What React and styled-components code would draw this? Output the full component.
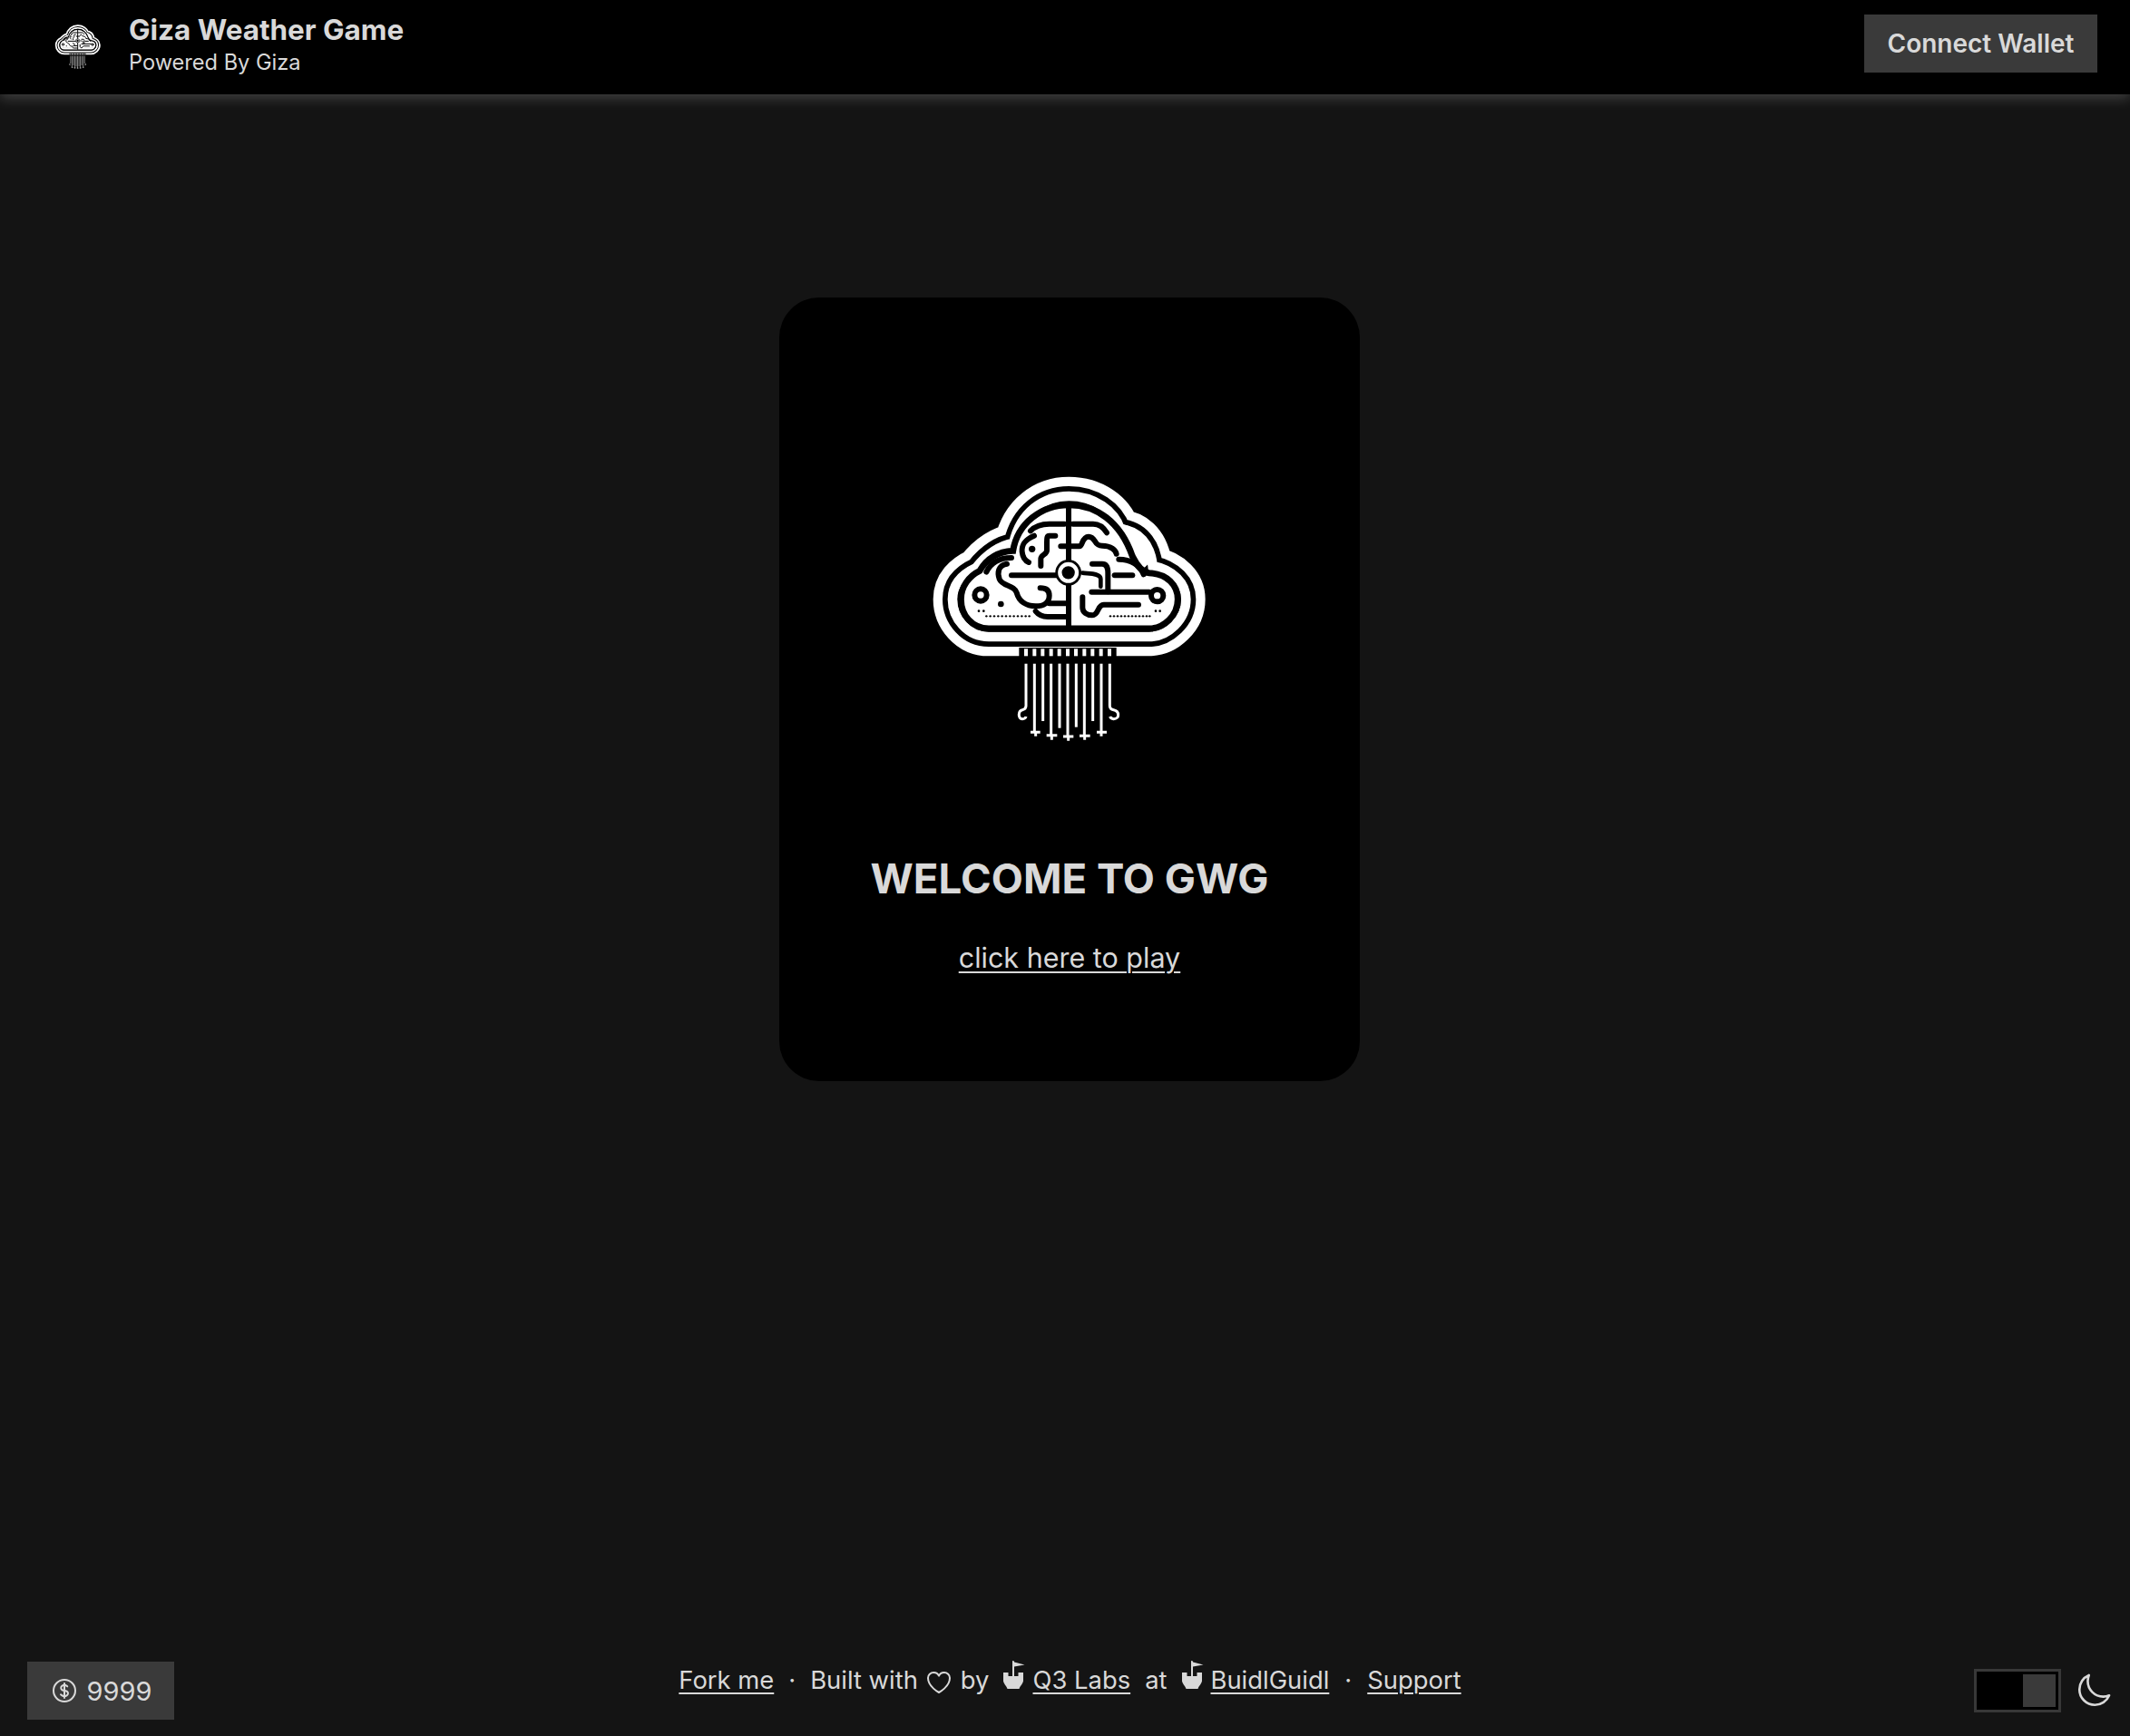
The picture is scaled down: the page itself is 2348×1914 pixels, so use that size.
import React from "react";
import styled, { createGlobalStyle } from "styled-components";
import { HiOutlineCurrencyDollar, HiOutlineHeart, HiOutlineMoon } from "react-icons/hi2";

const Global = createGlobalStyle`
  html, body { margin: 0; padding: 0; background: #141414; }
  body { font-family: Inter, "Liberation Sans", sans-serif; color: #d9d9d9; }
  * { box-sizing: border-box; }
`;

const Page = styled.div`
  display: flex;
  flex-direction: column;
  height: 1914px;
  background: #141414;
`;

const Navbar = styled.header`
  position: relative;
  z-index: 2;
  flex: none;
  display: flex;
  align-items: flex-start;
  justify-content: space-between;
  height: 104px;
  padding: 16px 36px 0 56px;
  background: #000;
  box-shadow: 0 4px 14px rgba(255, 255, 255, 0.2);
`;

const Brand = styled.div`
  display: flex;
  align-items: center;
  gap: 26px;
  height: 70px;
`;

const BrandText = styled.div`
  display: flex;
  flex-direction: column;
`;

const Title = styled.div`
  font-size: 31.4px;
  line-height: 36px;
  font-weight: 700;
  margin-top: -3px;
`;

const Subtitle = styled.div`
  font-size: 23.6px;
  line-height: 32px;
  font-weight: 400;
  margin-top: 2px;
`;

const ConnectButton = styled.button`
  width: 257px;
  height: 64px;
  border: 0;
  padding: 0;
  background: #3a3a3a;
  color: #d9d9d9;
  font: 600 28px Inter, sans-serif;
`;

const Main = styled.main`
  flex: 1;
  min-height: 0;
  display: flex;
  justify-content: center;
  padding: 224px 0 0 10px;
`;

const Card = styled.section`
  width: 640px;
  height: 864px;
  display: flex;
  flex-direction: column;
  align-items: center;
  padding-top: 172px;
  background: #000;
  border-radius: 44px;
`;

const Heading = styled.h1`
  margin: 102px 0 0;
  font-size: 45.6px;
  line-height: 54px;
  font-weight: 700;
  color: #d9d9d9;
`;

const PlayLink = styled.a`
  margin-top: 40px;
  font-size: 30.5px;
  line-height: 40px;
  color: #d9d9d9;
  text-decoration: underline;
  text-decoration-thickness: 2px;
  text-underline-offset: 4px;
`;

const Footer = styled.footer`
  flex: none;
  display: grid;
  grid-template-columns: 1fr auto 1fr;
  align-items: center;
  height: 82px;
  padding: 0 19px 18px 30px;
`;

const Balance = styled.div`
  justify-self: start;
  display: flex;
  align-items: center;
  justify-content: center;
  gap: 9px;
  width: 162px;
  height: 64px;
  background: #3a3a3a;
  font-size: 29px;
  font-weight: 400;
`;

const Credits = styled.nav`
  display: flex;
  align-items: center;
  height: 44px;
  margin-top: -24px;
  font-size: 27.4px;
  line-height: 36px;
`;

const CreditLink = styled.a`
  color: #d9d9d9;
  text-decoration: underline;
  text-decoration-thickness: 2px;
  text-underline-offset: 4px;
`;

const Dot = styled.span`
  margin: 0 ${(p) => p.$space}px;
`;

const Word = styled.span`
  margin: 0 ${(p) => p.$right ?? 7}px 0 ${(p) => p.$left ?? 0}px;
`;

const Castle = styled.svg`
  flex: none;
  width: 26px;
  height: 34px;
  margin: -10px 7px 0 0;
  fill: #d9d9d9;
`;

const HeartIcon = styled(HiOutlineHeart)`
  flex: none;
  margin: 6px 8px 0 0;
`;

const Controls = styled.div`
  justify-self: end;
  display: flex;
  align-items: center;
  gap: 15px;
`;

const Toggle = styled.div`
  display: flex;
  justify-content: flex-end;
  width: 96px;
  height: 48px;
  padding: 3px;
  border: 3px solid #383838;
  background: #000;
`;

const Knob = styled.div`
  width: 36px;
  height: 36px;
  background: #3a3a3a;
`;

const LogoSvg = styled.svg`
  flex: none;
  margin-left: ${(p) => p.$nudge}px;
`;

const bandPath =
  "M270 606C200 606 150 545 150 482C150 430 185 398 228 378C262 335 305 305 352 296C375 195 450 141 535 141C620 141 685 190 705 250C765 255 805 300 812 372C880 385 922 430 922 482C922 550 860 606 800 606Z";

const CloudLogo = ({ size, nudge = 0 }) => (
  <LogoSvg $nudge={nudge} width={size} height={(size * 1020) / 1080} viewBox="0 0 1080 1020" fill="none">
    <g strokeLinejoin="miter" strokeMiterlimit="3">
      <path d={bandPath} fill="#fff" stroke="#fff" strokeWidth="128" />
      <path d={bandPath} stroke="#000" strokeWidth="66" />
      <path d={bandPath} stroke="#fff" strokeWidth="32" />
      <path d="M705 232C760 240 800 290 808 355L770 392C745 350 735 290 705 232Z" fill="#fff" />
      <path d="M270 579C215 579 178 535 178 482C178 440 205 405 240 388C262 350 300 325 350 322C365 230 445 170 535 170C625 170 705 225 745 340C760 370 775 392 800 395C860 398 895 435 895 482C895 535 850 579 800 579Z" fill="#fff" stroke="#000" strokeWidth="21" />
    </g>
    <g stroke="#000" strokeWidth="18" strokeLinecap="round" strokeLinejoin="round">
      <path d="M534 172V360M534 430V572" strokeLinecap="butt" />
      <path d="M345 403H500" />
      <path d="M408 256C425 238 445 233 470 233H520M548 233H615C635 233 650 245 660 262" />
      <path d="M420 272C390 285 378 300 380 325C382 345 390 355 402 360" />
      <path d="M490 272H470C462 272 462 280 462 295V320C462 335 440 335 442 350V372" />
      <path d="M508 307H570C580 307 578 275 600 275C625 275 615 305 645 305C675 305 690 320 692 332" />
      <path d="M612 365H645C660 365 664 380 664 395V457" />
      <path d="M580 395C600 398 640 395 640 415V440" strokeWidth="14" />
      <path d="M686 403H745" />
      <path d="M610 458H800" />
      <path d="M580 475V510C580 525 595 535 612 535C635 535 628 500 650 500H765" />
      <path d="M330 365C300 370 298 395 305 415C315 440 355 435 362 460C370 490 395 505 425 505C450 505 470 495 470 470C470 450 455 445 440 445" />
      <path d="M470 496H525M425 522C435 535 445 540 465 540H525" />
      <path d="M262 392C275 365 300 345 345 345" />
      <path d="M700 350C740 350 770 370 782 400" />
      <circle cx="243" cy="468" r="20" />
      <circle cx="827" cy="470" r="20" />
    </g>
    <circle cx="533" cy="394" r="28" fill="#000" stroke="#000" strokeWidth="30" />
    <circle cx="533" cy="394" r="28" fill="#000" stroke="#fff" strokeWidth="13" />
    <g fill="#000">
      <circle cx="413" cy="316" r="11" />
      <circle cx="310" cy="498" r="10" />
      {[262, 275, 288, 301, 314, 327, 340, 353, 366, 379, 392, 404].map((x) => (
        <circle key={x} cx={x} cy="538" r="3.6" />
      ))}
      {[672, 684, 696, 708, 720, 732, 744, 756, 768, 780, 792, 802].map((x) => (
        <circle key={x} cx={x} cy="538" r="3.6" />
      ))}
      <circle cx="237" cy="521" r="4" />
      <circle cx="253" cy="521" r="4" />
      <circle cx="822" cy="521" r="4" />
      <circle cx="836" cy="521" r="4" />
    </g>
    <rect x="370" y="642" width="322" height="32" fill="#000" />
    <g fill="#fff">
      {[393, 421, 448, 476, 503, 531, 558, 586, 613, 641, 669].map((x) => (
        <rect key={x} x={x - 6} y="646" width="12" height="24" />
      ))}
    </g>
    <g stroke="#fff" strokeWidth="9" fill="none">
      <path d="M393 695V835Q393 846 381 848C366 851 366 878 381 878Q391 878 393 870" />
      <path d="M421 695V922M408 922H440M425 922V935" />
      <path d="M449 695V885" />
      <path d="M476 695V932M461 932H496M478 932V947" />
      <path d="M504 695V908" />
      <path d="M531 695V936M516 936H550M533 936V950" />
      <path d="M559 695V905" />
      <path d="M586 695V932M570 934H605M587 934V947" />
      <path d="M614 695V885" />
      <path d="M642 695V920M627 922H660M642 922V935" />
      <path d="M670 695V835Q670 846 683 848C703 852 703 878 683 878Q673 877 671 870" />
    </g>
  </LogoSvg>
);

const CastleMark = () => (
  <Castle viewBox="0 0 26 34">
    <path d="M11 1L13 1.5V2.5L24.5 5.5L13 7.5V18H11Z" />
    <path d="M1 14H6.5V18H17.5V14H23V23C23 26 20 28 18.5 32H5.5C4 28 1 26 1 23Z" />
  </Castle>
);

export default function App() {
  return (
    <Page>
      <Global />
      <Navbar>
        <Brand>
          <CloudLogo size={60} />
          <BrandText>
            <Title>Giza Weather Game</Title>
            <Subtitle>Powered By Giza</Subtitle>
          </BrandText>
        </Brand>
        <ConnectButton>Connect Wallet</ConnectButton>
      </Navbar>
      <Main>
        <Card>
          <CloudLogo size={360} nudge={2} />
          <Heading>WELCOME TO GWG</Heading>
          <PlayLink href="#">click here to play</PlayLink>
        </Card>
      </Main>
      <Footer>
        <Balance>
          <HiOutlineCurrencyDollar size={32} />
          <span>9999</span>
        </Balance>
        <Credits>
          <CreditLink href="#">Fork me</CreditLink>
          <Dot $space={16}>·</Dot>
          <Word>Built with</Word>
          <HeartIcon size={32} />
          <Word $right={15}>by</Word>
          <CastleMark />
          <CreditLink href="#">Q3 Labs</CreditLink>
          <Word $left={16} $right={15}>at</Word>
          <CastleMark />
          <CreditLink href="#">BuidlGuidl</CreditLink>
          <Dot $space={17}>·</Dot>
          <CreditLink href="#">Support</CreditLink>
        </Credits>
        <Controls>
          <Toggle>
            <Knob />
          </Toggle>
          <HiOutlineMoon size={42} />
        </Controls>
      </Footer>
    </Page>
  );
}
